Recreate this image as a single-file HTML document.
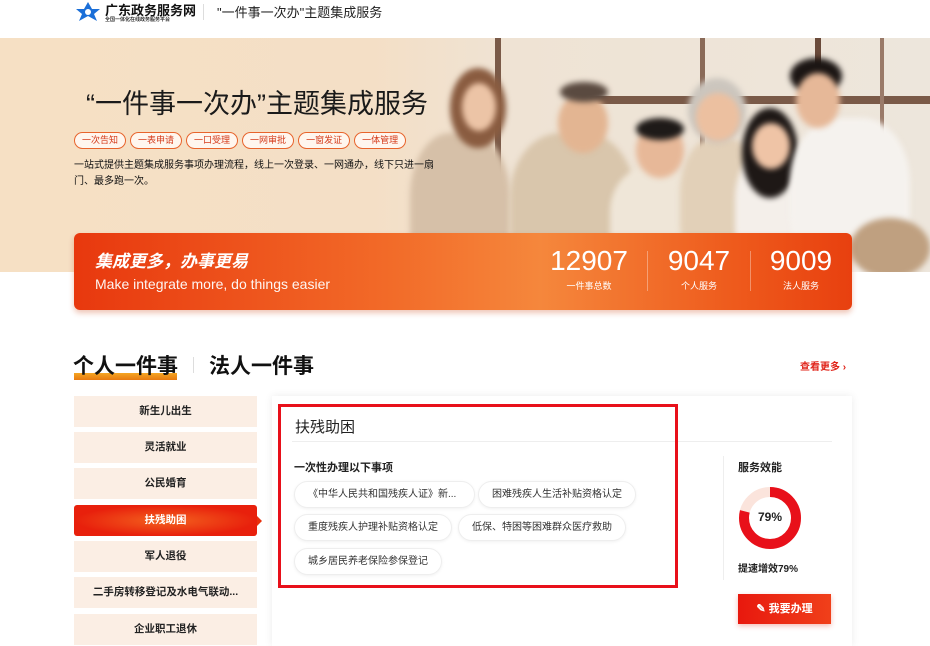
<!DOCTYPE html>
<html><head><meta charset="utf-8"><style>
*{margin:0;padding:0;box-sizing:border-box}
body{width:930px;height:640px;overflow:hidden;background:#fff;font-family:"Liberation Sans","Noto Sans CJK SC",sans-serif;color:#222;position:relative}
.a{position:absolute}
.hero{left:0;top:38px;width:930px;height:234px;background:linear-gradient(90deg,#f6e0c4 0%,#f4dfc6 40%,#efe3d4 55%,#ede6dc 100%);overflow:hidden}
.b{position:absolute;filter:blur(3px);border-radius:50%}
.tag{display:inline-block;height:17px;line-height:14px;border:1.5px solid #e8642c;border-radius:9px;font-size:9px;color:#d43a1a;padding:0 7px;margin-right:4px;background:#fff6ee}
.banner{left:74px;top:233px;width:778px;height:77px;border-radius:6px;background:linear-gradient(90deg,#e8380e 0%,#f26a28 40%,#f5873c 60%,#ee5a1c 85%,#e8400f 100%);box-shadow:0 3px 6px rgba(200,60,10,.3)}
.num{color:#fff;font-size:28px;text-align:center;position:absolute;top:12px}
.num div{font-size:9px;margin-top:2px}
.menu div{position:absolute;left:74px;width:183px;height:31px;background:#fbeee4;font-size:10.5px;text-align:center;line-height:31px;color:#222;font-weight:bold}
.chip{position:absolute;height:27px;line-height:25px;border:1px solid #eee;border-radius:14px;font-size:10px;padding:0 13px;color:#333;box-shadow:0 1px 3px rgba(0,0,0,.06);background:#fff;white-space:nowrap}
</style></head><body>
<svg class="a" style="left:75px;top:0" width="26" height="22" viewBox="0 0 26 22"><g fill="#1b6fd8"><path d="M13 2 L17 9 L25 9 L19 14 L22 21 L13 16 L4 21 L7 14 L1 9 L9 9Z"/></g><circle cx="13" cy="12" r="3" fill="#fff"/></svg>
<div class="a" style="left:105px;top:0;font-size:13px;font-weight:bold;color:#111">广东政务服务网</div>
<div class="a" style="left:105px;top:16px;font-size:5px;font-weight:bold;color:#333">全国一体化在线政务服务平台</div>
<div class="a" style="left:203px;top:4px;width:1px;height:16px;background:#ddd"></div>
<div class="a" style="left:217px;top:2px;font-size:13px;color:#222">"一件事一次办"主题集成服务</div>
<div class="a hero">
 <div class="a" style="left:495px;top:0;width:6px;height:180px;background:#7a5a48"></div>
 <div class="a" style="left:700px;top:0;width:5px;height:130px;background:#8a6a58"></div>
 <div class="a" style="left:590px;top:58px;width:340px;height:8px;background:#7a5a48"></div>
 <div class="a" style="left:815px;top:0;width:6px;height:60px;background:#6a4a3a"></div>
 <div class="a" style="left:880px;top:0;width:4px;height:200px;background:#9a7a68"></div>
 <div class="b" style="left:410px;top:95px;width:100px;height:160px;background:#d6c0a8;border-radius:40%"></div>
 <div class="b" style="left:450px;top:30px;width:56px;height:80px;background:#8a5c40"></div>
 <div class="b" style="left:462px;top:45px;width:34px;height:48px;background:#ecc4a6"></div>
 <div class="b" style="left:510px;top:95px;width:125px;height:160px;background:#d9c6ac;border-radius:40%"></div>
 <div class="b" style="left:558px;top:55px;width:50px;height:60px;background:#e3b592"></div>
 <div class="b" style="left:560px;top:44px;width:48px;height:20px;background:#5a4a40"></div>
 <div class="b" style="left:610px;top:130px;width:90px;height:110px;background:#efe6d8;border-radius:40%"></div>
 <div class="b" style="left:636px;top:85px;width:48px;height:55px;background:#e7b898"></div>
 <div class="b" style="left:636px;top:80px;width:48px;height:22px;background:#1e1a18"></div>
 <div class="b" style="left:680px;top:100px;width:80px;height:140px;background:#e2d0b8;border-radius:40%"></div>
 <div class="b" style="left:688px;top:40px;width:58px;height:65px;background:#ccc6be"></div>
 <div class="b" style="left:696px;top:55px;width:44px;height:48px;background:#ecc0a0"></div>
 <div class="b" style="left:735px;top:110px;width:80px;height:130px;background:#f4efea;border-radius:40%"></div>
 <div class="b" style="left:742px;top:70px;width:56px;height:90px;background:#1e1816"></div>
 <div class="b" style="left:752px;top:85px;width:38px;height:46px;background:#efc4a6"></div>
 <div class="b" style="left:790px;top:80px;width:120px;height:160px;background:#f5f2ee;border-radius:40%"></div>
 <div class="b" style="left:790px;top:20px;width:52px;height:36px;background:#1c1614"></div>
 <div class="b" style="left:796px;top:35px;width:44px;height:55px;background:#e6b898"></div>
 <div class="b" style="left:850px;top:180px;width:80px;height:60px;background:#bfa080"></div>
 <div class="a" style="left:86px;top:44px;font-size:27px;color:#1a1a1a;white-space:nowrap">“一件事一次办”主题集成服务</div>
 <div class="a" style="left:74px;top:92px;white-space:nowrap"><span class="tag">一次告知</span><span class="tag">一表申请</span><span class="tag">一口受理</span><span class="tag">一网审批</span><span class="tag">一窗发证</span><span class="tag">一体管理</span></div>
 <div class="a" style="left:74px;top:120px;width:370px;font-size:10px;line-height:16px;color:#111">一站式提供主题集成服务事项办理流程，线上一次登录、一网通办，线下只进一扇门、最多跑一次。</div>
</div>
<div class="a banner">
 <div class="a" style="left:21px;top:14px;color:#fff;font-size:17px;font-weight:bold;font-style:italic">集成更多，办事更易</div>
 <div class="a" style="left:21px;top:43px;color:#fff;font-size:14px;opacity:.95">Make integrate more, do things easier</div>
 <div class="num" style="left:475px;width:80px">12907<div>一件事总数</div></div>
 <div class="a" style="left:573px;top:18px;width:1px;height:40px;background:rgba(255,255,255,.35)"></div>
 <div class="num" style="left:590px;width:70px">9047<div>个人服务</div></div>
 <div class="a" style="left:676px;top:18px;width:1px;height:40px;background:rgba(255,255,255,.35)"></div>
 <div class="num" style="left:692px;width:70px">9009<div>法人服务</div></div>
</div>
<div class="a" style="left:74px;top:373px;width:103px;height:7px;background:linear-gradient(#f5a623,#e87a10)"></div>
<div class="a" style="left:73px;top:350px;font-size:21px;font-weight:bold;color:#111">个人一件事</div>
<div class="a" style="left:193px;top:357px;width:1px;height:16px;background:#ddd"></div>
<div class="a" style="left:209px;top:350px;font-size:21px;font-weight:bold;color:#111">法人一件事</div>
<div class="a" style="left:800px;top:358px;font-size:10px;color:#e0241a;font-weight:bold">查看更多 ›</div>
<div class="menu">
 <div style="top:396px">新生儿出生</div>
 <div style="top:432px">灵活就业</div>
 <div style="top:468px">公民婚育</div>
 <div style="top:505px;background:radial-gradient(ellipse at center,#f3621e 0%,#e8200c 70%);color:#fff;border-radius:3px">扶残助困</div>
 <div style="top:541px">军人退役</div>
 <div style="top:577px">二手房转移登记及水电气联动...</div>
 <div style="top:614px">企业职工退休</div>
</div>
<div class="a" style="left:257px;top:516px;width:0;height:0;border-left:5px solid #e8300c;border-top:5px solid transparent;border-bottom:5px solid transparent"></div>
<div class="a" style="left:272px;top:396px;width:580px;height:250px;background:#fff;box-shadow:0 0 8px rgba(0,0,0,.08)"></div>
<div class="a" style="left:295px;top:416px;font-size:15px;color:#222">扶残助困</div>
<div class="a" style="left:292px;top:441px;width:540px;height:1px;background:#eee"></div>
<div class="a" style="left:294px;top:459px;font-size:11px;color:#222;font-weight:bold">一次性办理以下事项</div>
<div class="chip" style="left:294px;top:481px;width:181px">《中华人民共和国残疾人证》新...</div>
<div class="chip" style="left:478px;top:481px">困难残疾人生活补贴资格认定</div>
<div class="chip" style="left:294px;top:514px">重度残疾人护理补贴资格认定</div>
<div class="chip" style="left:458px;top:514px">低保、特困等困难群众医疗救助</div>
<div class="chip" style="left:294px;top:548px">城乡居民养老保险参保登记</div>
<div class="a" style="left:278px;top:404px;width:400px;height:184px;border:3px solid #e8101a"></div>
<div class="a" style="left:723px;top:456px;width:1px;height:124px;background:#eee"></div>
<div class="a" style="left:738px;top:459px;font-size:11px;font-weight:bold">服务效能</div>
<svg class="a" style="left:737px;top:485px" width="66" height="66" viewBox="0 0 66 66"><circle cx="33" cy="33" r="26" fill="none" stroke="#fbe4dc" stroke-width="10"/><circle cx="33" cy="33" r="26" fill="none" stroke="#e8101a" stroke-width="10" stroke-dasharray="129 163.4" transform="rotate(-90 33 33)"/></svg>
<div class="a" style="left:737px;top:510px;width:66px;text-align:center;font-size:12px;font-weight:bold">79%</div>
<div class="a" style="left:738px;top:560px;font-size:10px;font-weight:bold">提速增效79%</div>
<div class="a" style="left:738px;top:594px;width:93px;height:30px;background:linear-gradient(90deg,#e8180e,#f0401a);color:#fff;font-size:11px;font-weight:bold;text-align:center;line-height:30px;box-shadow:0 2px 5px rgba(220,30,10,.3)">✎ 我要办理</div>
</body></html>
